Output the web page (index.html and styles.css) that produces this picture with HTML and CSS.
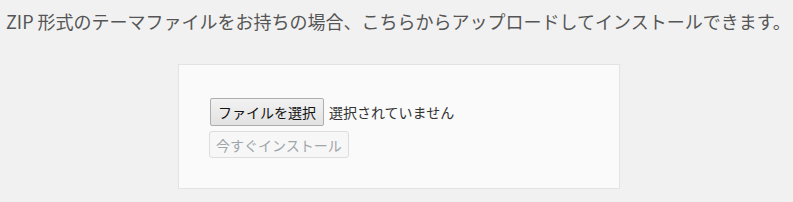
FILE: index.html
```html
<!DOCTYPE html>
<html lang="ja">
<head>
    <meta charset="UTF-8">
    <title>テーマのアップロード</title>
    <link rel="stylesheet" href="styles.css">
</head>
<body>
    <p class="install-help">ZIP 形式のテーマファイルをお持ちの場合、こちらからアップロードしてインストールできます。</p>

    <form class="upload-form">
        <div class="file-row">
            <button type="button" class="file-btn">ファイルを選択</button>
            <span class="file-name">選択されていません</span>
        </div>
        <button type="submit" class="install-btn" disabled>今すぐインストール</button>
    </form>
</body>
</html>
```

FILE: styles.css
```css
body {
    margin: 0;
    background-color: #f1f1f1;
    font-family: "Noto Sans CJK JP", "Noto Sans", sans-serif;
    color: #444;
}
.install-help {
    margin: 0;
    padding: 9px 0 0 6px;
    font-size: 18px;
    line-height: 24px;
    color: #555;
    white-space: nowrap;
}
.upload-form {
    box-sizing: border-box;
    width: 442px;
    height: 125px;
    margin: 31px 0 0 178px;
    padding: 33px 30px 30px 31px;
    background-color: #fafafa;
    border: 1px solid #e3e3e3;
    box-shadow: 0 1px 1px rgba(0,0,0,0.04);
    display: flex;
    flex-direction: column;
    align-items: flex-start;
    gap: 5px;
}
.file-row {
    display: flex;
    align-items: center;
    gap: 5px;
}
.file-btn {
    box-sizing: border-box;
    height: 28px;
    padding: 0 7px;
    font-family: inherit;
    font-size: 14px;
    color: #111;
    background: linear-gradient(#f2f2f2, #e2e2e2);
    border: 1px solid #adadad;
    border-radius: 2px;
}
.file-name {
    font-size: 14px;
    color: #333;
}
.install-btn {
    box-sizing: border-box;
    height: 27px;
    padding: 0 6px;
    margin-left: -1px;
    font-family: inherit;
    font-size: 14px;
    color: #a0a5aa;
    background-color: #f7f7f7;
    border: 1px solid #ddd;
    border-radius: 3px;
}
```
